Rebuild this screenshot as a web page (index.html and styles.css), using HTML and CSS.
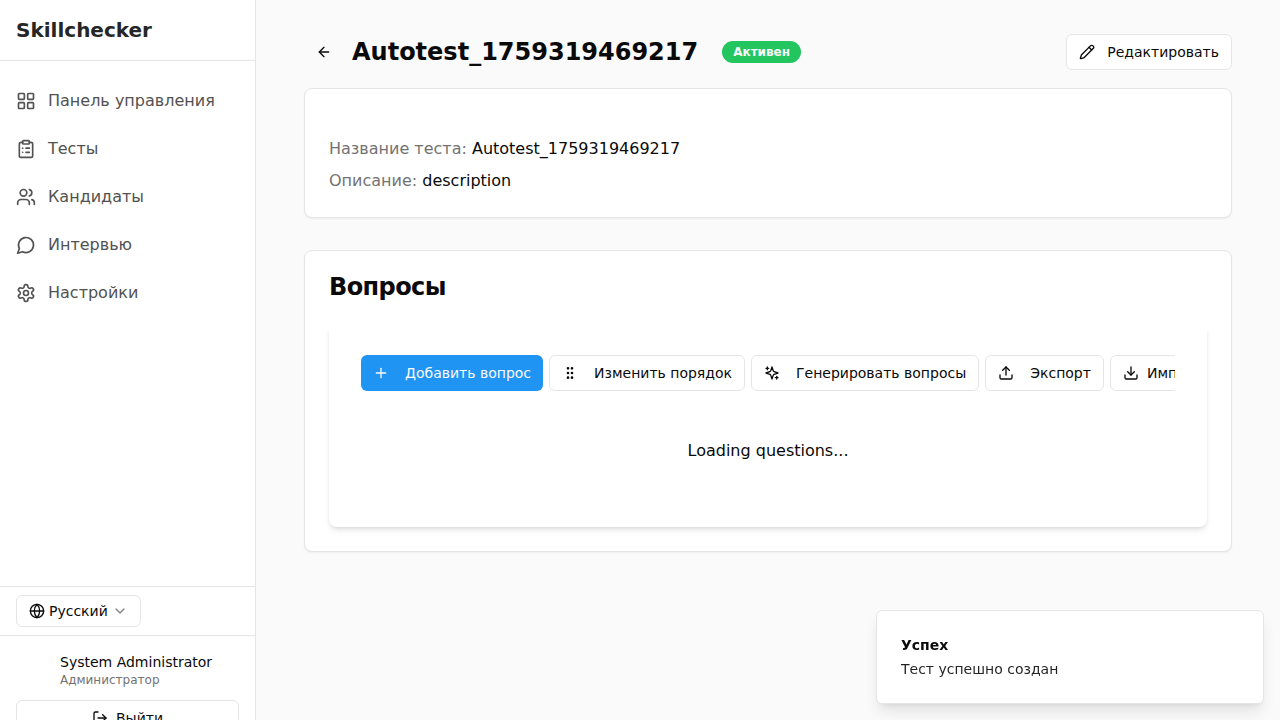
FILE: index.html
```html
<!DOCTYPE html>
<html lang="ru">
<head>
<meta charset="utf-8">
<title>Skillchecker</title>
<link rel="stylesheet" href="styles.css">
</head>
<body>
<div class="app">
  <aside class="sidebar">
    <div class="brand">Skillchecker</div>
    <nav class="nav">
      <a class="nav-item"><svg class="icon icon-lg" viewBox="0 0 24 24"><rect width="7" height="7" x="3" y="3" rx="1"/><rect width="7" height="7" x="14" y="3" rx="1"/><rect width="7" height="7" x="14" y="14" rx="1"/><rect width="7" height="7" x="3" y="14" rx="1"/></svg>Панель управления</a>
      <a class="nav-item"><svg class="icon icon-lg" viewBox="0 0 24 24"><rect width="8" height="4" x="8" y="2" rx="1" ry="1"/><path d="M16 4h2a2 2 0 0 1 2 2v14a2 2 0 0 1-2 2H6a2 2 0 0 1-2-2V6a2 2 0 0 1 2-2h2"/><path d="M12 11h4"/><path d="M12 16h4"/><path d="M8 11h.01"/><path d="M8 16h.01"/></svg>Тесты</a>
      <a class="nav-item"><svg class="icon icon-lg" viewBox="0 0 24 24"><path d="M16 21v-2a4 4 0 0 0-4-4H6a4 4 0 0 0-4 4v2"/><circle cx="9" cy="7" r="4"/><path d="M22 21v-2a4 4 0 0 0-3-3.87"/><path d="M16 3.13a4 4 0 0 1 0 7.75"/></svg>Кандидаты</a>
      <a class="nav-item"><svg class="icon icon-lg" viewBox="0 0 24 24"><path d="M7.9 20A9 9 0 1 0 4 16.1L2 22Z"/></svg>Интервью</a>
      <a class="nav-item"><svg class="icon icon-lg" viewBox="0 0 24 24"><path d="M12.22 2h-.44a2 2 0 0 0-2 2v.18a2 2 0 0 1-1 1.73l-.43.25a2 2 0 0 1-2 0l-.15-.08a2 2 0 0 0-2.73.73l-.22.38a2 2 0 0 0 .73 2.73l.15.1a2 2 0 0 1 1 1.72v.51a2 2 0 0 1-1 1.74l-.15.09a2 2 0 0 0-.73 2.73l.22.38a2 2 0 0 0 2.73.73l.15-.08a2 2 0 0 1 2 0l.43.25a2 2 0 0 1 1 1.73V20a2 2 0 0 0 2 2h.44a2 2 0 0 0 2-2v-.18a2 2 0 0 1 1-1.73l.43-.25a2 2 0 0 1 2 0l.15.08a2 2 0 0 0 2.73-.73l.22-.39a2 2 0 0 0-.73-2.73l-.15-.08a2 2 0 0 1-1-1.74v-.5a2 2 0 0 1 1-1.74l.15-.09a2 2 0 0 0 .73-2.73l-.22-.38a2 2 0 0 0-2.73-.73l-.15.08a2 2 0 0 1-2 0l-.43-.25a2 2 0 0 1-1-1.73V4a2 2 0 0 0-2-2z"/><circle cx="12" cy="12" r="3"/></svg>Настройки</a>
    </nav>
    <div class="language">
      <button class="select"><svg class="icon" viewBox="0 0 24 24"><circle cx="12" cy="12" r="10"/><path d="M12 2a14.5 14.5 0 0 0 0 20 14.5 14.5 0 0 0 0-20"/><path d="M2 12h20"/></svg>Русский<svg class="icon muted-icon" viewBox="0 0 24 24"><path d="m6 9 6 6 6-6"/></svg></button>
    </div>
    <div class="account">
      <div class="user">
        <div class="user-name">System Administrator</div>
        <div class="user-role">Администратор</div>
      </div>
      <button class="button logout"><svg class="icon" viewBox="0 0 24 24"><path d="M9 21H5a2 2 0 0 1-2-2V5a2 2 0 0 1 2-2h4"/><path d="m16 17 5-5-5-5"/><path d="M21 12H9"/></svg>Выйти</button>
    </div>
  </aside>
  <main class="content">
    <header class="page-head">
      <button class="back"><svg class="icon" viewBox="0 0 24 24"><path d="m12 19-7-7 7-7"/><path d="M19 12H5"/></svg></button>
      <h1 class="page-title">Autotest_1759319469217</h1>
      <span class="badge">Активен</span>
      <button class="button edit"><svg class="icon" viewBox="0 0 24 24"><path d="M21.174 6.812a1 1 0 0 0-3.986-3.987L3.842 16.174a2 2 0 0 0-.5.83l-1.321 4.352a.5.5 0 0 0 .623.622l4.353-1.32a2 2 0 0 0 .83-.497z"/><path d="m15 5 4 4"/></svg>Редактировать</button>
    </header>
    <section class="card details">
      <div><span class="label">Название теста:</span> Autotest_1759319469217</div>
      <div><span class="label">Описание:</span> description</div>
    </section>
    <section class="card questions">
      <h2 class="section-title">Вопросы</h2>
      <div class="panel">
        <div class="toolbar">
          <button class="button wide primary"><svg class="icon" viewBox="0 0 24 24"><path d="M5 12h14"/><path d="M12 5v14"/></svg>Добавить вопрос</button>
          <button class="button wide"><svg class="icon" viewBox="0 0 24 24"><circle cx="9" cy="12" r="1"/><circle cx="9" cy="5" r="1"/><circle cx="9" cy="19" r="1"/><circle cx="15" cy="12" r="1"/><circle cx="15" cy="5" r="1"/><circle cx="15" cy="19" r="1"/></svg>Изменить порядок</button>
          <button class="button wide"><svg class="icon" viewBox="0 0 24 24"><path d="m12 3-1.912 5.813a2 2 0 0 1-1.275 1.275L3 12l5.813 1.912a2 2 0 0 1 1.275 1.275L12 21l1.912-5.813a2 2 0 0 1 1.275-1.275L21 12l-5.813-1.912a2 2 0 0 1-1.275-1.275L12 3Z"/><path d="M5 3v4"/><path d="M19 17v4"/><path d="M3 5h4"/><path d="M17 19h4"/></svg>Генерировать вопросы</button>
          <button class="button wide"><svg class="icon" viewBox="0 0 24 24"><path d="M21 15v4a2 2 0 0 1-2 2H5a2 2 0 0 1-2-2v-4"/><path d="m17 8-5-5-5 5"/><path d="M12 3v12"/></svg>Экспорт</button>
          <button class="button"><svg class="icon" viewBox="0 0 24 24"><path d="M21 15v4a2 2 0 0 1-2 2H5a2 2 0 0 1-2-2v-4"/><path d="m7 10 5 5 5-5"/><path d="M12 15V3"/></svg>Импорт</button>
        </div>
        <div class="loading">Loading questions...</div>
      </div>
    </section>
  </main>
</div>
<div class="toast">
  <div class="toast-title">Успех</div>
  <div class="toast-text">Тест успешно создан</div>
</div>
</body>
</html>
```
FILE: styles.css
```css
* { box-sizing: border-box; }
body {
  margin: 0;
  background: #fafafa;
  color: #0a0a0a;
  font: 16px/24px "DejaVu Sans", sans-serif;
  overflow: hidden;
}
h1, h2 { margin: 0; }
.app { display: flex; height: 100vh; overflow: hidden; }
.icon {
  width: 16px;
  height: 16px;
  flex: none;
  fill: none;
  stroke: currentColor;
  stroke-width: 2;
  stroke-linecap: round;
  stroke-linejoin: round;
}
.icon-lg { width: 20px; height: 20px; }
.muted-icon { opacity: .5; }

.sidebar {
  width: 256px;
  flex: none;
  display: flex;
  flex-direction: column;
  overflow: hidden;
  background: #fff;
  border-right: 1px solid #e5e5e5;
}
.brand {
  flex: none;
  padding: 16px 16px;
  border-bottom: 1px solid #e5e5e5;
  color: #262626;
  font-size: 20px;
  font-weight: 700;
  line-height: 28px;
}
.nav { flex: 1; padding: 16px 0; }
.nav-item {
  display: flex;
  align-items: center;
  gap: 12px;
  height: 48px;
  padding: 0 16px;
  color: #525252;
}
.language { flex: none; padding: 8px 16px; border-top: 1px solid #e5e5e5; }
.select {
  display: flex;
  align-items: center;
  gap: 4px;
  height: 32px;
  padding: 0 12px;
  border: 1px solid #e5e5e5;
  border-radius: 6px;
  background: #fff;
  color: #0a0a0a;
  font: 14px/20px "DejaVu Sans", sans-serif;
}
.account {
  flex: none;
  height: 85px;
  padding: 16px 16px 0;
  border-top: 1px solid #e5e5e5;
}
.user { padding-left: 44px; margin-bottom: 12px; }
.user-name { font-size: 14px; line-height: 20px; }
.user-role { color: #737373; font-size: 12px; line-height: 16px; }

.button {
  flex: none;
  display: flex;
  align-items: center;
  justify-content: center;
  gap: 8px;
  height: 36px;
  padding: 0 12px;
  border: 1px solid #e5e5e5;
  border-radius: 6px;
  background: #fff;
  color: #0a0a0a;
  font: 14px/20px "DejaVu Sans", sans-serif;
  white-space: nowrap;
}
.wide { gap: 16px; }
.primary { border: 0; background: #2094f3; color: #fafafa; }
.logout { width: 100%; }
.edit { gap: 12px; margin-left: auto; }

.content { flex: 1; min-width: 0; padding: 32px 48px; }
.page-head { display: flex; align-items: center; height: 40px; margin-bottom: 16px; }
.back {
  display: flex;
  align-items: center;
  justify-content: center;
  width: 40px;
  height: 36px;
  margin-right: 8px;
  padding: 0;
  border: 0;
  background: none;
  color: #0a0a0a;
}
.page-title { font-size: 24px; font-weight: 700; line-height: 32px; }
.badge {
  margin-left: 24px;
  padding: 3px 11px;
  border-radius: 11px;
  background: #22c55e;
  color: #fafafa;
  font-size: 12px;
  font-weight: 600;
  line-height: 16px;
}
.card {
  border: 1px solid #e5e5e5;
  border-radius: 8px;
  background: #fff;
  box-shadow: 0 1px 2px rgba(0, 0, 0, .05);
}
.details {
  display: flex;
  flex-direction: column;
  gap: 8px;
  margin-bottom: 32px;
  padding: 48px 24px 24px;
}
.label { color: #737373; }
.questions { padding: 24px; }
.section-title {
  margin-bottom: 24px;
  font-size: 24px;
  font-weight: 600;
  line-height: 24px;
  letter-spacing: -.6px;
}
.panel {
  height: 204px;
  padding: 32px;
  border-radius: 8px;
  background: #fff;
  box-shadow: 0 4px 6px -1px rgba(0, 0, 0, .1), 0 2px 4px -2px rgba(0, 0, 0, .1);
}
.toolbar { display: flex; gap: 6px; overflow: hidden; }
.loading { padding: 48px 0; text-align: center; }

.toast {
  position: fixed;
  right: 16px;
  bottom: 16px;
  display: flex;
  flex-direction: column;
  gap: 4px;
  width: 388px;
  height: 94px;
  padding: 24px;
  border: 1px solid #e5e5e5;
  border-radius: 6px;
  background: #fff;
  box-shadow: 0 10px 15px -3px rgba(0, 0, 0, .1), 0 4px 6px -4px rgba(0, 0, 0, .1);
  font-size: 14px;
  line-height: 20px;
}
.toast-title { font-weight: 600; }
.toast-text { opacity: .9; }
```
